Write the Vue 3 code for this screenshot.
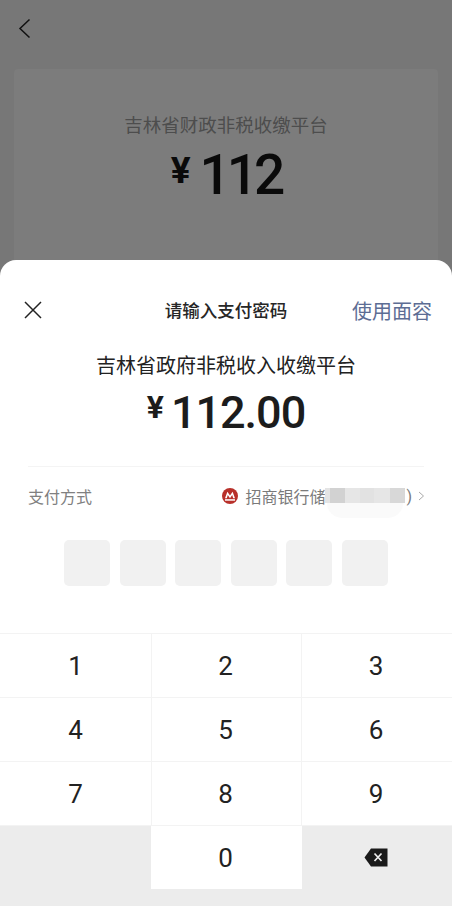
<script setup>
const boxes = [1, 2, 3, 4, 5, 6]
const keys = ['1', '2', '3', '4', '5', '6', '7', '8', '9']
const segments = [
  { w: 5, c: '#e4e4e4' }, { w: 15, c: '#d2d2d2' }, { w: 15, c: '#e6e6e6' }, { w: 14, c: '#e2e2e2' }, { w: 16, c: '#e6e6e6' }, { w: 15, c: '#d8d8d8' }
]
</script>

<template>
  <div class="page">
    <div class="back-bar">
      <svg class="back" width="14" height="22" viewBox="0 0 14 22" fill="none">
        <path d="M11.5 1.5 2 10.5 11.5 19.5" stroke="#111" stroke-width="1.5" />
      </svg>
    </div>
    <div class="card">
      <div class="card-title">吉林省财政非税收缴平台</div>
      <div class="card-amount"><span class="card-yen">¥</span>112</div>
    </div>

    <div class="sheet">
      <div class="sheet-head">
        <svg class="close" width="18" height="18" viewBox="0 0 18 18" fill="none">
          <path d="M1 1 17 17M17 1 1 17" stroke="#222" stroke-width="1.5" />
        </svg>
        <div class="head-title">请输入支付密码</div>
        <div class="head-link">使用面容</div>
      </div>
      <div class="merchant">吉林省政府非税收入收缴平台</div>
      <div class="amount"><span class="yen">¥</span>112.00</div>
      <div class="divider"></div>
      <div class="pay-row">
        <span class="pay-label">支付方式</span>
        <div class="pay-bank">
          <svg class="bank-logo" width="18" height="18" viewBox="0 0 18 18">
            <circle cx="9" cy="9" r="8" fill="#b8302a" />
            <path d="M4 11.2 6.4 4.8 9 8.6 11.6 4.8 14 11.2H12.2L11.2 8 9 11.2 6.8 8 5.8 11.2Z" fill="#fff" />
            <rect x="4" y="12.2" width="10" height="1.5" fill="#fff" />
          </svg>
          <span class="bank-name">招商银行储</span>
          <span class="mask">
            <i v-for="(s, i) in segments" :key="i" :style="{ width: s.w + 'px', background: s.c }"></i>
          </span>
          <span class="bank-name">)</span>
          <svg class="chev" width="7" height="10" viewBox="0 0 7 10" fill="none">
            <path d="M1 1 5.5 5 1 9" stroke="#aaa" stroke-width="1" />
          </svg>
        </div>
      </div>
      <div class="pin">
        <div v-for="b in boxes" :key="b" class="pin-box"></div>
      </div>
      <div class="keypad">
        <div v-for="k in keys" :key="k" class="key">{{ k }}</div>
        <div class="key blank"></div>
        <div class="key zero">0</div>
        <div class="key blank del">
          <svg width="24" height="19" viewBox="0 0 24 19">
            <path d="M7 0.5H23.5V18.5H7L0.5 9.5Z" fill="#1a1a1a" />
            <path d="M10.5 5.5 17.5 13M17.5 5.5 10.5 13" stroke="#eee" stroke-width="1.7" />
          </svg>
        </div>
      </div>
    </div>
  </div>
</template>

<style scoped>
.page {
  position: relative;
  width: 452px;
  height: 906px;
  overflow: hidden;
  background: #777;
  font-family: Roboto, "Noto Sans CJK SC", sans-serif;
  color: #1a1a1a;
}
.back-bar {
  height: 69px;
  padding: 18px 0 0 18px;
  box-sizing: border-box;
}
.back { display: block; }
.card {
  height: 300px;
  margin: 0 14px;
  padding-top: 45px;
  box-sizing: border-box;
  background: #7c7c7c;
  border-radius: 4px;
  text-align: center;
}
.card-title {
  font-size: 18.5px;
  line-height: 24px;
  color: #4d4d4d;
}
.card-amount {
  margin-top: 7px;
  font-size: 55px;
  line-height: 60px;
  font-weight: 500;
  letter-spacing: -4px;
  color: #0a0a0a;
}
.card-yen {
  font-size: 37px;
  line-height: 1;
  font-weight: 700;
  letter-spacing: 0;
  margin-right: 9px;
  vertical-align: 11px;
}
.sheet {
  position: absolute;
  left: 0;
  right: 0;
  top: 260px;
  bottom: 0;
  display: flex;
  flex-direction: column;
  background: #fff;
  border-radius: 16px 16px 0 0;
}
.sheet-head {
  position: relative;
  display: flex;
  align-items: center;
  justify-content: center;
  height: 64px;
  padding-top: 38px;
  box-sizing: border-box;
}
.close {
  position: absolute;
  left: 24px;
  top: 41px;
}
.head-title {
  font-size: 17.5px;
  font-weight: 500;
  color: #262626;
  line-height: 24px;
}
.head-link {
  position: absolute;
  right: 20px;
  top: 39px;
  font-size: 20px;
  line-height: 26px;
  color: #5d6d94;
}
.merchant {
  margin-top: 28px;
  text-align: center;
  font-size: 20px;
  line-height: 28px;
  color: #222;
}
.amount {
  margin-top: 6px;
  text-align: center;
  font-size: 45px;
  line-height: 54px;
  font-weight: 500;
  letter-spacing: -1px;
  color: #1c1c1c;
}
.yen {
  font-size: 32px;
  line-height: 1;
  font-weight: 700;
  letter-spacing: 0;
  margin-right: 7px;
  vertical-align: 10px;
}
.divider {
  height: 1px;
  margin: 26px 28px 0;
  background: #f4f4f4;
}
.pay-row {
  height: 58px;
  margin: 0 27px 0 28px;
  display: flex;
  align-items: center;
  justify-content: space-between;
}
.pay-label {
  font-size: 16px;
  color: #808080;
}
.pay-bank {
  position: relative;
  display: flex;
  align-items: center;
}
.bank-logo { margin-right: 6px; }
.bank-name {
  font-size: 16px;
  color: #7a7a7a;
}
.mask {
  position: relative;
  display: flex;
  height: 15px;
  width: 80px;
  margin: -1px 1px 0 0;
}
.mask i { display: block; }
.mask::after {
  content: "";
  position: absolute;
  left: 2px;
  right: 2px;
  top: 15px;
  height: 15px;
  background: #fafafa;
  border-radius: 0 0 16px 16px;
}
.chev { margin-left: 6px; }
.pin {
  margin-top: 15px;
  display: flex;
  justify-content: center;
  gap: 9.6px;
}
.pin-box {
  width: 46px;
  height: 46px;
  background: #f1f1f1;
  border-radius: 5px;
}
.keypad {
  position: absolute;
  left: 0;
  right: 0;
  top: 373px;
  bottom: 0;
  display: grid;
  grid-template-columns: 152px 150px 150px;
  grid-template-rows: 64px 64px 64px 63px 1fr;
  background: #fff;
  border-top: 1px solid #f3f3f3;
  box-sizing: border-box;
}
.key {
  display: flex;
  align-items: center;
  justify-content: center;
  font-size: 26px;
  color: #222;
  border-bottom: 1px solid #f3f3f3;
  border-right: 1px solid #f3f3f3;
  box-sizing: border-box;
}
.key:nth-child(3n) { border-right: none; padding-right: 2px; }
.key:nth-child(3n + 2) { padding-right: 2px; }
.blank {
  background: #ececec;
  border: none;
  grid-row: 4 / 6;
}
.zero {
  border: none;
  background: #fff;
  margin-left: -1px;
}
.keypad::after {
  content: "";
  grid-column: 2;
  grid-row: 5;
  margin-left: -1px;
  background: #ececec;
}
.del { padding-bottom: 18px; }
</style>
